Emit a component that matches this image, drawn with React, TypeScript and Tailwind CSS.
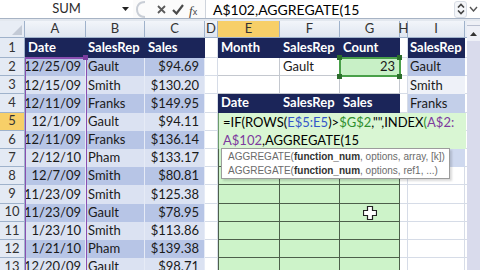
import React from 'react';

const SALES: [string, string, string][] = [
  ['12/25/09', 'Gault', '$94.69'],
  ['12/15/09', 'Smith', '$130.20'],
  ['12/11/09', 'Franks', '$149.95'],
  ['12/1/09', 'Gault', '$94.11'],
  ['12/11/09', 'Franks', '$136.14'],
  ['2/12/10', 'Pham', '$133.17'],
  ['12/7/09', 'Smith', '$80.81'],
  ['11/23/09', 'Smith', '$125.38'],
  ['11/23/09', 'Gault', '$78.95'],
  ['1/23/10', 'Smith', '$113.86'],
  ['1/21/10', 'Pham', '$139.38'],
  ['12/20/09', 'Gault', '$98.71'],
];

const COL_LETTERS = ['A', 'B', 'C', 'D', 'E', 'F', 'G', 'H', 'I'];

const NAVY = 'bg-[#1b2559] text-white font-bold border-r border-b border-[#1b2559]';
const GRID = 'border-r border-b border-[#d6dce7]';
const GREEN = 'bg-[#cdf3c9] border-r border-b border-[#4d5f4b]';

function tableBg(r: number) {
  return r % 2 === 0 ? 'bg-[#b7c5e6]' : 'bg-[#dbe2f2]';
}

function FormulaBar() {
  return (
    <div className="flex h-[19px] items-stretch border-b border-[#a7b3c4] bg-white">
      {/* name box */}
      <div className="relative flex w-[133px] items-center justify-center bg-white text-[13px] text-[#2b2b2b]">
        SUM
        <svg className="absolute left-[122px] top-[7px]" width="7" height="4" viewBox="0 0 7 4">
          <path d="M0 0 H7 L3.5 4 Z" fill="#222" />
        </svg>
      </div>
      <div className="relative flex w-[73px] items-center border-r border-[#cfd4dc] bg-[#fbfbfb]">
        <svg className="absolute left-[2px] top-[1px]" width="12" height="17" viewBox="0 0 12 17">
          <path d="M10 1 C 3 1, 2 6, 2 8.5 C 2 11, 3 16, 10 16" fill="none" stroke="#c9ced6" strokeWidth="2" />
        </svg>
        <svg className="absolute left-[24px] top-[5px]" width="9" height="9" viewBox="0 0 9 9">
          <path d="M1 1 L8 8 M8 1 L1 8" stroke="#5a5a5a" strokeWidth="1.8" />
        </svg>
        <svg className="absolute left-[39px] top-[4px]" width="12" height="11" viewBox="0 0 12 11">
          <path d="M1 6 L4.5 9.5 L11 1" fill="none" stroke="#4a4a4a" strokeWidth="2.2" />
        </svg>
        <span className="absolute left-[56px] top-[1px] font-[Liberation_Serif,serif] text-[13px] italic text-[#444]">
          f<span className="text-[9px] not-italic font-[Liberation_Sans,sans-serif]">x</span>
        </span>
      </div>
      <div className="flex flex-1 items-center pl-[7px] font-[Lato,sans-serif] text-[14px] text-black">
        A$102,AGGREGATE(15
      </div>
      <div className="flex w-[28px] items-center gap-[2px] pl-[2px]">
        <div className="flex h-[17px] w-[13px] flex-col items-center justify-center gap-[2px] rounded-[3px] border border-[#d8dde5] bg-[#f4f6f9]">
          <svg width="8" height="5" viewBox="0 0 8 5">
            <path d="M1 4.5 L4 1.5 L7 4.5" fill="none" stroke="#444" strokeWidth="1.6" />
          </svg>
          <svg width="8" height="5" viewBox="0 0 8 5">
            <path d="M1 0.5 L4 3.5 L7 0.5" fill="none" stroke="#444" strokeWidth="1.6" />
          </svg>
        </div>
        <svg width="9" height="6" viewBox="0 0 9 6">
          <path d="M1 1 L4.5 5 L8 1" fill="none" stroke="#555" strokeWidth="1.4" />
        </svg>
      </div>
    </div>
  );
}

function HeaderRow() {
  return (
    <>
      <div className="relative border-r border-b border-[#9fb2cb] bg-[#e8edf5]">
        <svg className="absolute right-[2px] bottom-[2px]" width="10" height="10" viewBox="0 0 10 10">
          <path d="M10 0 V10 H0 Z" fill="#c3cad6" />
        </svg>
      </div>
      {COL_LETTERS.map((c) => (
        <div
          key={c}
          className={`flex items-center justify-center border-r border-b border-[#9fb2cb] text-[13px] text-[#333] ${
            c === 'E' ? 'bg-[#f7cf68]' : 'bg-gradient-to-b from-[#f2f5fa] to-[#dfe6f0]'
          }`}
        >
          {c}
        </div>
      ))}
      <div className="border-b border-[#9fb2cb] bg-[#e8edf5]" />
    </>
  );
}

function Row({ r }: { r: number }) {
  const d = SALES[r - 2];
  const cells: React.ReactNode[] = [];

  cells.push(
    <div
      key="h"
      className={`flex items-center justify-center border-r border-b border-[#9fb2cb] text-[13px] text-[#333] ${
        r === 5 ? 'bg-[#f7cf68]' : 'bg-[#e4eaf4]'
      }`}
    >
      {r}
    </div>
  );

  // A, B, C
  if (r === 1) {
    cells.push(<div key="a" className={`${NAVY} flex items-center pl-[3px]`}>Date</div>);
    cells.push(<div key="b" className={`${NAVY} flex items-center pl-[2px]`}>SalesRep</div>);
    cells.push(<div key="c" className={`${NAVY} flex items-center pl-[3px]`}>Sales</div>);
  } else {
    const bg = tableBg(r);
    cells.push(
      <div key="a" className={`${bg} flex items-center justify-end border-r border-[#e6ebf6] pr-[4px]`}>
        {d[0]}
      </div>
    );
    cells.push(
      <div key="b" className={`${bg} flex items-center border-r border-[#e6ebf6] pl-[2px]`}>
        {d[1]}
      </div>
    );
    cells.push(
      <div key="c" className={`${bg} flex items-center justify-end border-r border-[#e6ebf6] pr-[5px]`}>
        {d[2]}
      </div>
    );
  }

  // D
  cells.push(<div key="d" className={GRID} />);

  // E, F, G
  if (r === 1 || r === 4) {
    const labels = r === 1 ? ['Month', 'SalesRep', 'Count'] : ['Date', 'SalesRep', 'Sales'];
    labels.forEach((t, i) =>
      cells.push(
        <div key={'efg' + i} className={`${NAVY} flex items-center pl-[3px]`}>
          {t}
        </div>
      )
    );
  } else if (r === 2) {
    cells.push(<div key="e" className="border-r border-b border-[#c4c8cf] bg-white" />);
    cells.push(
      <div key="f" className="flex items-center border-r border-b border-[#c4c8cf] bg-white pl-[3px]">
        Gault
      </div>
    );
    cells.push(
      <div key="g" className="flex items-center justify-end border-r border-b border-[#c4c8cf] bg-[#c8f0c6] pr-[4px]">
        23
      </div>
    );
  } else if (r === 3) {
    cells.push(<div key="e" className="border-r border-b border-[#c4c8cf] bg-white" />);
    cells.push(<div key="f" className="border-r border-b border-[#c4c8cf] bg-white" />);
    cells.push(<div key="g" className="border-r border-b border-[#c4c8cf] bg-white" />);
  } else {
    cells.push(<div key="e" className={`${GREEN} border-l`} />);
    cells.push(<div key="f" className={GREEN} />);
    cells.push(<div key="g" className={GREEN} />);
  }

  // H
  cells.push(<div key="hcol" className={GRID} />);

  // I
  if (r === 1) {
    cells.push(<div key="i" className={`${NAVY} flex items-center pl-[2px]`}>SalesRep</div>);
  } else if (r === 2) {
    cells.push(<div key="i" className="flex items-center bg-[#b7c5e6] pl-[2px]">Gault</div>);
  } else if (r === 3) {
    cells.push(<div key="i" className="flex items-center bg-[#eef1f8] pl-[2px]">Smith</div>);
  } else if (r === 4) {
    cells.push(<div key="i" className="flex items-center bg-[#c3cfe9] pl-[2px]">Franks</div>);
  } else if (r === 7) {
    cells.push(<div key="i" className="bg-[#cfd9ef]" />);
  } else {
    cells.push(<div key="i" className={GRID} />);
  }

  cells.push(<div key="j" className="border-b border-[#d6dce7]" />);
  return <>{cells}</>;
}

export default function App() {
  const rows = Array.from({ length: 13 }, (_, i) => i + 1);
  return (
    <div className="h-[270px] w-[480px] overflow-hidden bg-white font-[Lato,sans-serif] text-[13px] text-[#1a1a1a]">
      <FormulaBar />
      <div className="h-[2px] bg-[#e3e8ef]" />
      <div className="flex">
        <div className="relative">
          <div className="grid grid-cols-[25px_61px_59px_60px_13px_62px_60px_60px_8px_57px_2px] grid-rows-[17px_20px_repeat(12,18.2px)]">
            <HeaderRow />
            {rows.map((r) => (
              <Row key={r} r={r} />
            ))}
          </div>

          {/* purple range border A2:A102 */}
          <div className="absolute left-[25px] top-[36px] h-[240px] w-[62px] border-t-2 border-r border-l border-[#8a4fb0]" />
          <div className="absolute left-[83px] top-[34px] h-[5px] w-[5px] bg-[#7a3fa0]" />

          {/* green reference border $G$2 */}
          <div className="absolute left-[339px] top-[36px] h-[20px] w-[62px] border-2 border-[#49a049]" />
          <div className="absolute left-[337px] top-[34px] h-[5px] w-[5px] bg-[#2c6e2c]" />
          <div className="absolute left-[397px] top-[34px] h-[5px] w-[5px] bg-[#2c6e2c]" />
          <div className="absolute left-[337px] top-[53px] h-[5px] w-[5px] bg-[#2c6e2c]" />
          <div className="absolute left-[397px] top-[53px] h-[5px] w-[5px] bg-[#2c6e2c]" />

          {/* in-cell editor */}
          <div className="absolute left-[218px] top-[92px] h-[36px] w-[248px] whitespace-nowrap border-l border-[#6c9a6a] bg-[#d9f6d3] pl-[4px] text-[13px] leading-[18px] text-black">
            <div>
              =IF(ROWS(<span className="text-[#3456c8]">E$5:E5</span>)&gt;
              <span className="text-[#2f8f2f]">$G$2</span>,"",INDEX<span className="text-[#2f8f2f]">(</span>
              <span className="text-[#7d3a9e]">A$2:</span>
            </div>
            <div>
              <span className="text-[#7d3a9e]">A$102</span>,AGGREGATE(15
            </div>
          </div>

          {/* function tooltip */}
          <div className="absolute left-[221px] top-[127px] h-[31px] w-[229px] whitespace-nowrap border border-[#9c9c9c] bg-white pl-[6px] pt-[1px] font-[Liberation_Sans,sans-serif] text-[10px] leading-[14px] text-[#6b6b6b] shadow-[2px_2px_2px_rgba(0,0,0,0.15)]">
            <div>
              AGGREGATE(<span className="font-bold text-[#333]">function_num</span>, options, array, [k])
            </div>
            <div>
              AGGREGATE(<span className="font-bold text-[#333]">function_num</span>, options, ref1, ...)
            </div>
          </div>

          {/* cell cursor */}
          <svg className="absolute left-[363px] top-[185px]" width="14" height="14" viewBox="0 0 14 14">
            <path
              d="M4.5 0.5 H9.5 V4.5 H13.5 V9.5 H9.5 V13.5 H4.5 V9.5 H0.5 V4.5 H4.5 Z"
              fill="#fff"
              stroke="#222"
              strokeWidth="1.2"
            />
          </svg>
        </div>

        {/* vertical scrollbar */}
        <div className="flex w-[13px] flex-col bg-[#d9dbec]">
          <div className="h-[5px] border-b border-[#b9bfd0] bg-[#eef0f6]" />
          <div className="flex h-[15px] items-center justify-center bg-[#eef0f7]">
            <svg width="7" height="4" viewBox="0 0 7 4">
              <path d="M0 4 H7 L3.5 0 Z" fill="#333" />
            </svg>
          </div>
        </div>
      </div>
    </div>
  );
}
